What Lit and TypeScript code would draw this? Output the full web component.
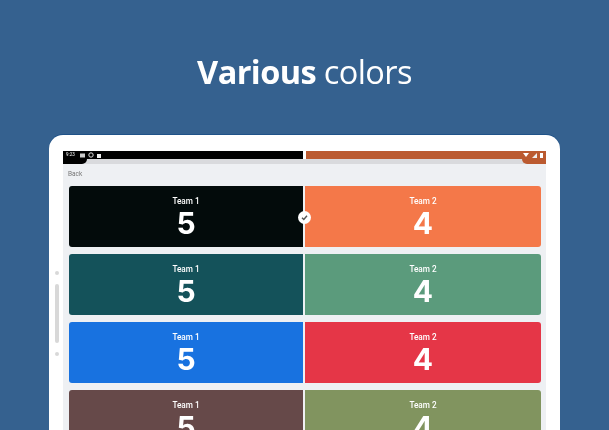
import { LitElement, html, css } from "lit";
import { customElement } from "lit/decorators.js";

const rows = [
  ["#030b0b", "#f47849"],
  ["#14525a", "#5b9b7c"],
  ["#1872e0", "#e53647"],
  ["#664949", "#81945f"],
];

@customElement("app-root")
export class AppRoot extends LitElement {
  static styles = css`
    :host { display: block; width: 609px; height: 430px; overflow: hidden; background: #35618f; }
    .title { margin: 0; height: 135px; box-sizing: border-box; padding-top: 51px; text-align: center;
      font: 400 32.5px/42px "Open Sans", sans-serif; letter-spacing: -0.6px; color: #fff; filter: blur(0.3px); }
    .title b { font-weight: 700; }
    .tablet { position: relative; margin-left: 49px; width: 511px; height: 295px; box-sizing: border-box;
      background: #fff; border-radius: 14px 14px 0 0; padding: 15px 14px 0; box-shadow: 0 -1px 0 #1f5288; }
    .screen { width: 483px; height: 280px; overflow: hidden; background: #eef0f3; filter: blur(0.35px); }
    .status { display: flex; gap: 3px; height: 8px; padding-top: 1px; background: #fff; }
    .status > div { flex: 1; display: flex; align-items: center; gap: 3px; padding: 0 3px; }
    .sb-l { background: #000; }
    .sb-r { background: #bb5a30; justify-content: flex-end; }
    .time { font: 500 4.5px/8px Roboto, sans-serif; color: #ddd; margin-right: 2px; }
    .strip { display: flex; height: 5px; background: #d9dadd; justify-content: space-between; }
    .tab { width: 24px; height: 5px; }
    .tab-l { background: #000; border-bottom-right-radius: 6px; }
    .tab-r { background: #bb5a30; border-bottom-left-radius: 6px; }
    .back { font: 400 6.5px/8px Roboto, sans-serif; color: #777; padding: 6px 0 0 5px; height: 16px; box-sizing: content-box; }
    .list { display: flex; flex-direction: column; gap: 7px; padding: 0 5px 0 6px; }
    .row { position: relative; display: flex; gap: 2px; height: 61px; flex: none; }
    .card { display: flex; flex-direction: column; align-items: center; color: #fff; }
    .card.a { width: 234px; border-radius: 3px 0 0 3px; }
    .card.b { width: 236px; border-radius: 0 3px 3px 0; }
    .name { font: 500 8.2px/10px Roboto, sans-serif; margin-top: 10px; }
    .score { font: 700 30px/32px Inter, sans-serif; margin-top: 1px; }
    .badge { position: absolute; left: 229px; top: 25px; width: 13px; height: 13px; border-radius: 50%;
      background: #fff; display: flex; align-items: center; justify-content: center; }
    .side { position: absolute; left: 5px; top: 136px; width: 5px; display: flex; flex-direction: column; align-items: center; }
    .dot { width: 4px; height: 4px; border-radius: 50%; background: #d8d8d8; }
    .bar { width: 4px; height: 59px; border-radius: 2px; background: #d8d8d8; margin: 9px 0; }
    svg { display: block; }
  `;

  render() {
    return html`
      <h1 class="title"><b>Various</b> colors</h1>
      <div class="tablet">
        <div class="side"><div class="dot"></div><div class="bar"></div><div class="dot"></div></div>
        <div class="screen">
          <div class="status">
            <div class="sb-l">
              <span class="time">9:23</span>
              <svg width="5" height="5" viewBox="0 0 5 5"><rect width="5" height="4" y=".5" fill="#ccc"/></svg>
              <svg width="6" height="6" viewBox="0 0 6 6"><circle cx="3" cy="3" r="2.2" fill="none" stroke="#ddd"/></svg>
              <svg width="4" height="5" viewBox="0 0 4 5"><rect width="4" height="4" y="1" fill="#eee"/></svg>
            </div>
            <div class="sb-r">
              <svg width="6" height="5" viewBox="0 0 6 5"><path d="M0 0h6L3 4z" fill="#fff"/></svg>
              <svg width="5" height="5" viewBox="0 0 5 5"><path d="M5 0v5H0z" fill="#eee"/></svg>
              <svg width="3" height="5" viewBox="0 0 3 5"><rect width="3" height="5" fill="#fff"/></svg>
            </div>
          </div>
          <div class="strip"><div class="tab tab-l"></div><div class="tab tab-r"></div></div>
          <div class="back">Back</div>
          <div class="list">
            ${rows.map(
              ([a, b], i) => html`
                <div class="row">
                  <div class="card a" style="background:${a}"><div class="name">Team 1</div><div class="score">5</div></div>
                  <div class="card b" style="background:${b}"><div class="name">Team 2</div><div class="score">4</div></div>
                  ${i === 0
                    ? html`<div class="badge"><svg width="9" height="9" viewBox="0 0 9 9"><path d="M2 4.8l1.8 1.7L7 2.8" fill="none" stroke="#555" stroke-width="1.4"/></svg></div>`
                    : ""}
                </div>`
            )}
          </div>
        </div>
      </div>
    `;
  }
}
